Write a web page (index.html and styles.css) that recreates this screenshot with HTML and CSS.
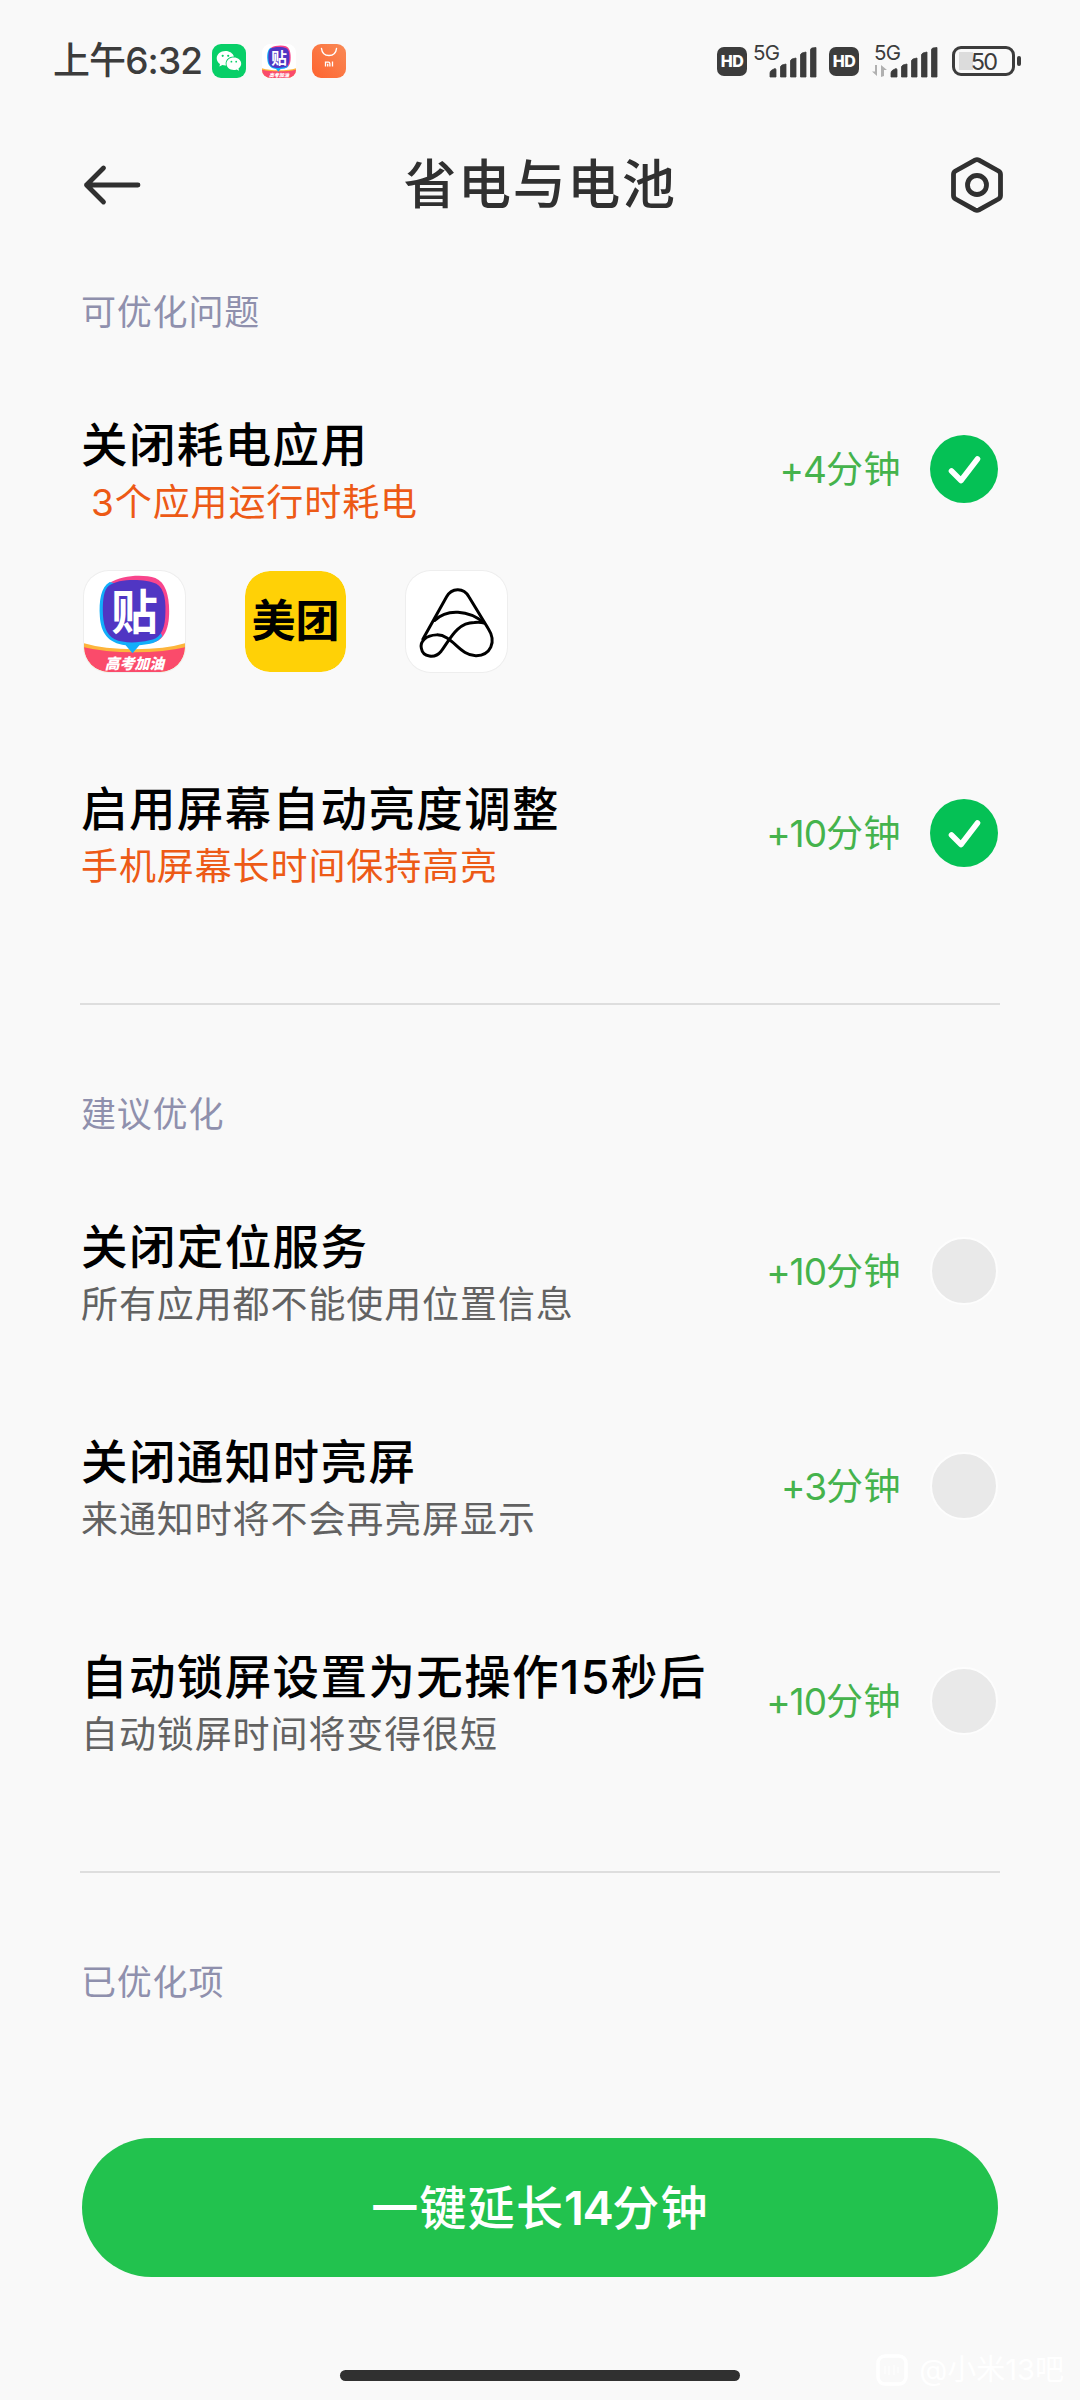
FILE: index.html
```html
<!DOCTYPE html>
<html lang="zh-CN">
<head>
<meta charset="utf-8">
<title>省电与电池</title>
<link rel="stylesheet" href="styles.css">
</head>
<body>
<svg class="defs" width="0" height="0" aria-hidden="true">
  <defs>
    <clipPath id="tile"><rect width="102" height="102" rx="25"/></clipPath>
    <linearGradient id="mi" x1="1" y1="0" x2="0" y2="1"><stop offset="0" stop-color="#f98a56"/><stop offset="1" stop-color="#fe6430"/></linearGradient>
    <symbol id="tieba" viewBox="0 0 102 102">
      <g clip-path="url(#tile)">
        <rect width="102" height="102" fill="#fff"/>
        <path d="M0 73Q20 79 51 79T102 73V102H0Z" fill="#fdb53c"/>
        <path d="M0 77Q20 82 51 82T102 77V102H0Z" fill="#fa4b6b"/>
        <path d="M26 12C38 4 60 3 72 7C82 11 86 24 86 41C86 60 80 72 66 73L30 60Z" fill="#f8458c"/>
        <path d="M26 11C17 16 15 30 16 46C17 62 24 73 42 75L49 83L56 75C67 74 74 73 79 66L60 20Z" fill="#12aefa"/>
        <path d="M25 15C35 7 63 8 73 13C82 18 83 32 82 47C81 61 76 69 66 70C54 73 39 73 31 69C22 65 19 53 19 40C19 29 20 19 25 15Z" fill="#5036c3"/>
        <text class="tieba-mark" x="51" y="59" text-anchor="middle">贴</text>
        <text class="tieba-banner" x="51" y="99" text-anchor="middle" textLength="60">高考加油</text>
      </g>
    </symbol>
    <symbol id="bars" viewBox="0 0 48 31">
      <path d="M1 30V26Q1 24 3 23L6 21.500Q7 21.500 7 23V30ZM11.500 30V20Q11.500 19 13 18L17 17V30ZM21.500 30V14Q21.500 13 23 12L27 11V30ZM31.500 30V8Q31.500 7 33 6L37 5V30ZM41.500 30V3Q41.500 1.500 43 1L47 .5V30Z" fill="#3c3c3c" stroke="#3c3c3c" stroke-width=".8" stroke-linejoin="round"/>
    </symbol>
  </defs>
</svg>

<div class="screen">
  <div class="status">
    <span class="clock">上午6:32</span>
    <div class="notices">
      <svg width="34" height="34" viewBox="0 0 34 34">
        <rect width="34" height="34" rx="9" fill="#08cf68"/>
        <path d="M13.500 7C8.500 7 4.700 10.200 4.700 14.200C4.700 16.600 6 18.600 8 20L7.400 22.600L10.400 21.100Q12 21.600 14 21.500C12.500 17 16 12.500 22 12.600C21 9.300 17.700 7 13.500 7Z" fill="#fff"/>
        <path d="M21.800 13.600C17.600 13.600 14.500 16.300 14.500 19.700C14.500 23.200 17.700 25.900 21.800 25.900Q23.400 25.900 24.600 25.400L27 26.700L26.500 24.400C28.200 23.200 29.200 21.500 29.200 19.700C29.200 16.300 26 13.600 21.800 13.600Z" fill="#fff"/>
        <g fill="#08cf68"><circle cx="10.700" cy="11.800" r="1.100"/><circle cx="16.200" cy="11.800" r="1.100"/><circle cx="19.400" cy="17.700" r=".9"/><circle cx="24.200" cy="17.700" r=".9"/></g>
      </svg>
      <svg width="34" height="34"><use href="#tieba"/></svg>
      <svg width="34" height="34" viewBox="0 0 34 34">
        <rect width="34" height="34" rx="9" fill="url(#mi)"/>
        <path d="M9.500 4.500C10 9 13 11.500 17 11.500S24 9 24.500 4.500" fill="none" stroke="#fff" stroke-width="1.400" stroke-linecap="round"/>
        <path d="M13.500 22.500V18.200H16.400Q17.900 18.200 17.900 19.700V22.500M15.700 19.800V22.500M20.500 17.500V22.500" fill="none" stroke="#fff" stroke-width="1.300"/>
      </svg>
    </div>
    <div class="signals">
      <span class="hd">HD</span>
      <div class="cell"><span class="net">5G</span><svg class="bars" width="48" height="31"><use href="#bars"/></svg></div>
      <span class="hd hd-second">HD</span>
      <div class="cell cell-data"><span class="net">5G</span>
        <svg class="data" width="16" height="12" viewBox="0 0 16 12"><path d="M5 0V11L0 6.500H3V0ZM9 12V0L15 5H12V11Z" fill="#b0b0b0"/></svg>
        <svg class="bars" width="48" height="31"><use href="#bars"/></svg></div>
      <div class="battery">50</div>
      <i class="battery-tip"></i>
    </div>
  </div>

  <header class="bar">
    <svg width="60" height="44" viewBox="0 0 60 44"><path d="M56 22H4.500M21.500 5L4.500 22L21.500 39" fill="none" stroke="#303030" stroke-width="4.800" stroke-linecap="round" stroke-linejoin="round"/></svg>
    <h1>省电与电池</h1>
    <svg width="56" height="60" viewBox="0 0 56 60"><path d="M26 5.200Q28 4.200 30 5.200L49.500 16Q51.500 17.200 51.500 19.500V40.500Q51.500 42.800 49.500 44L30 54.800Q28 55.800 26 54.800L6.500 44Q4.500 42.800 4.500 40.500V19.500Q4.500 17.200 6.500 16Z" fill="none" stroke="#303030" stroke-width="4.800"/><circle cx="28" cy="30" r="9.500" fill="none" stroke="#303030" stroke-width="4.800"/></svg>
  </header>

  <main>
    <section>
      <h2>可优化问题</h2>
      <div class="row">
        <div class="info"><h3>关闭耗电应用</h3><p class="warn indent">3个应用运行时耗电</p></div>
        <span class="gain"><b>+4</b>分钟</span>
        <svg class="check" width="68" height="68" viewBox="0 0 68 68"><circle cx="34" cy="34" r="34" fill="#05c155"/><path d="M21.500 36L31 45.500L47.500 24" fill="none" stroke="#fff" stroke-width="5.600" stroke-linecap="round" stroke-linejoin="round"/></svg>
      </div>
      <div class="apps">
        <svg class="app" width="101" height="101"><use href="#tieba"/></svg>
        <svg class="app app-yellow" width="101" height="101" viewBox="0 0 102 102"><rect width="102" height="102" rx="25" fill="#ffd106"/><text class="meituan" x="51" y="67" text-anchor="middle">美团</text></svg>
        <svg class="app" width="101" height="101" viewBox="0 0 102 102"><rect width="102" height="102" rx="25" fill="#fff"/>
          <g fill="none" stroke="#000" stroke-width="3" stroke-linecap="round" stroke-linejoin="round">
            <path d="M17 69L41 26C46 17 58 16 63.500 26L83 58C92 72 85 85 71 85.500C54 86 47 64 31 64.500C20 65 14 71 15.500 78C17 87 29 89 35.500 81C44 70 51 52 69 52Q75 51.500 79 52.500"/>
            <path d="M29 50C41 38 63 39 79 52.500"/>
          </g></svg>
      </div>
      <div class="row row-second">
        <div class="info"><h3>启用屏幕自动亮度调整</h3><p class="warn">手机屏幕长时间保持高亮</p></div>
        <span class="gain"><b>+10</b>分钟</span>
        <svg class="check" width="68" height="68" viewBox="0 0 68 68"><circle cx="34" cy="34" r="34" fill="#05c155"/><path d="M21.500 36L31 45.500L47.500 24" fill="none" stroke="#fff" stroke-width="5.600" stroke-linecap="round" stroke-linejoin="round"/></svg>
      </div>
    </section>
    <section>
      <h2>建议优化</h2>
      <div class="row">
        <div class="info"><h3>关闭定位服务</h3><p>所有应用都不能使用位置信息</p></div>
        <span class="gain"><b>+10</b>分钟</span><i class="circle"></i>
      </div>
      <div class="row">
        <div class="info"><h3>关闭通知时亮屏</h3><p>来通知时将不会再亮屏显示</p></div>
        <span class="gain"><b>+3</b>分钟</span><i class="circle"></i>
      </div>
      <div class="row">
        <div class="info"><h3>自动锁屏设置为无操作15秒后</h3><p>自动锁屏时间将变得很短</p></div>
        <span class="gain"><b>+10</b>分钟</span><i class="circle"></i>
      </div>
    </section>
    <section>
      <h2>已优化项</h2>
    </section>
  </main>

  <footer>
    <button>一键延长<b>14</b>分钟</button>
    <div class="home"></div>
  </footer>
  <div class="credit">
    <svg width="32" height="32" viewBox="0 0 32 32"><rect x="2" y="2" width="28" height="28" rx="7" fill="none" stroke="#fff" stroke-width="3.500"/><path d="M9 12V20M13 12V21M18 11V21M22 13V19" stroke="#fff" stroke-width="1"/></svg>
    <span>@小米13吧</span>
  </div>
</div>
</body>
</html>
```
FILE: styles.css
```css
* { box-sizing: border-box; margin: 0; padding: 0; }
body {
  background: #f9f9f9;
  font-family: Inter, "Noto Sans CJK SC", sans-serif;
}
svg { display: block; flex: none; }
.defs { position: absolute; }
h1, h2, h3, p, span, button { white-space: nowrap; }
.screen {
  position: relative;
  width: 1080px;
  height: 2400px;
  overflow: hidden;
  display: flex;
  flex-direction: column;
}

.status {
  height: 122px;
  padding: 0 59px 0 53px;
  display: flex;
  align-items: center;
  color: #3c3c3c;
}
.clock { width: 159px; font-size: 37px; line-height: 50px; font-weight: 500; letter-spacing: -0.9px; }
.notices { display: flex; gap: 16px; }
.signals { display: flex; align-items: center; margin-left: auto; }
.hd {
  width: 30px;
  height: 29px;
  border-radius: 7px;
  background: #3c3c3c;
  color: #fff;
  font: 800 16px/29px Inter, sans-serif;
  text-align: center;
  letter-spacing: -0.5px;
}
.hd-second { margin-left: 12px; }
.cell { position: relative; width: 63px; height: 34px; margin-left: 7px; }
.cell-data { width: 66px; margin-left: 13px; }
.net { position: absolute; left: -1px; top: 0; font-size: 20.500px; line-height: 17px; letter-spacing: -0.8px; }
.cell-data .net { left: 2px; }
.bars { position: absolute; right: 0; bottom: 0; }
.data { position: absolute; left: 0; bottom: 1px; }
.battery {
  width: 63px;
  height: 30px;
  margin-left: 14px;
  border: 3px solid #3c3c3c;
  border-radius: 9px;
  background: linear-gradient(#dcdcdc, #dcdcdc) 4px 3px / 14px 18px no-repeat;
  font-size: 23.500px;
  line-height: 25px;
  text-align: center;
  letter-spacing: -1.800px;
}
.battery-tip { width: 4px; height: 10px; margin-left: 2px; border-radius: 2px; background: #3c3c3c; }

.bar {
  height: 126px;
  padding: 0 75px 0 82px;
  display: flex;
  align-items: center;
  justify-content: space-between;
}
h1 { margin-right: 11px; font-size: 53px; line-height: 72px; font-weight: 500; letter-spacing: 1.600px; color: #303030; }

main { padding: 0 80px; }
section { padding-top: 85px; }
section:first-child { padding-top: 40px; }
section + section { border-top: 2px solid #dedede; margin-top: 107px; }
h2 { padding-left: 1px; font-size: 35px; line-height: 48px; font-weight: 400; letter-spacing: 0.800px; color: #8f90ad; }
.row { display: flex; align-items: flex-start; height: 116px; margin-top: 80px; padding: 0 2px 0 1px; }
.row + .row { margin-top: 99px; }
.row-second { margin-top: 108px; }
.info { flex: 1; padding-top: 1px; }
h3 { font-size: 46.500px; line-height: 56px; font-weight: 500; letter-spacing: 1.400px; color: #000; }
p { font-size: 37px; line-height: 60px; letter-spacing: 0.900px; color: #626262; }
.warn { color: #ed5a16; }
.indent { padding-left: 10px; }
.gain { margin: 24px 29px 0 0; font-size: 37px; line-height: 60px; letter-spacing: 0.500px; color: #45b34c; }
.gain b { font-weight: 400; letter-spacing: -1px; }
.check { margin-top: 19px; }
.circle { width: 68px; height: 68px; margin-top: 19px; border: 2px solid #fdfdfd; border-radius: 50%; background: #e9e9e9; }

.apps { display: flex; gap: 60px; margin-top: 39px; padding-left: 4px; }
.app { border-radius: 25px; box-shadow: 0 0 0 1px #eee; }
.app-yellow { box-shadow: none; }
.tieba-mark { font: 700 47px "Noto Sans CJK SC", sans-serif; fill: #fff; }
.tieba-banner { font: italic 900 15px "Noto Sans CJK SC", sans-serif; fill: #fff; }
.meituan { font: 700 44.500px "Noto Sans CJK SC", sans-serif; fill: #000; }

footer { margin-top: auto; padding: 0 82px 19px; }
button {
  display: block;
  width: 916px;
  height: 139px;
  border: 0;
  border-radius: 70px;
  background: #22c24e;
  color: #fff;
  font: 500 47px/139px Inter, "Noto Sans CJK SC", sans-serif;
  letter-spacing: 1.200px;
}
button b { font-weight: 600; letter-spacing: -1.500px; }
.home { width: 400px; height: 11px; margin: 93px auto 0; border-radius: 6px; background: #303030; }
.credit {
  position: absolute;
  right: 16px;
  bottom: 12px;
  display: flex;
  align-items: center;
  gap: 11px;
  color: #fff;
  font-size: 29px;
  line-height: 36px;
}
```
